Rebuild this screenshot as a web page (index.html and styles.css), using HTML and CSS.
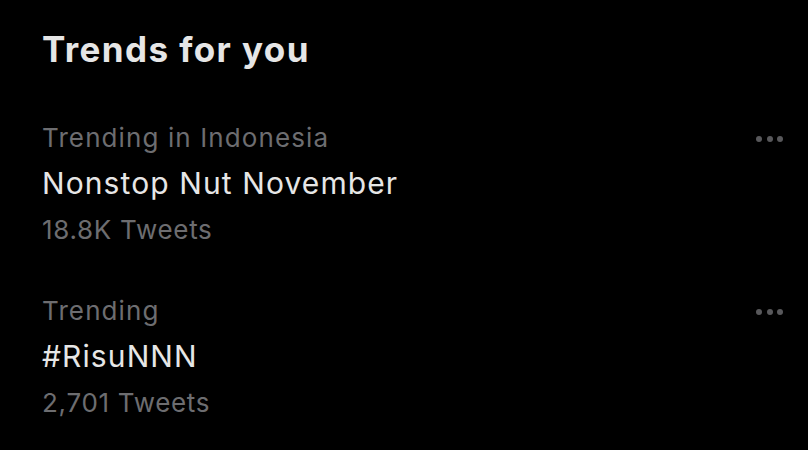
FILE: index.html
```html
<!DOCTYPE html>
<html>
<head>
<meta charset="utf-8">
<link rel="stylesheet" href="styles.css">
</head>
<body>
<section class="panel">
  <h1 class="title">Trends for you</h1>
  <div class="trends">
    <div class="trend">
      <div class="trend-text">
        <div class="context">Trending in Indonesia</div>
        <div class="name">Nonstop Nut November</div>
        <div class="count">18.8K Tweets</div>
      </div>
      <div class="more"><span></span><span></span><span></span></div>
    </div>
    <div class="trend">
      <div class="trend-text">
        <div class="context">Trending</div>
        <div class="name">#RisuNNN</div>
        <div class="count">2,701 Tweets</div>
      </div>
      <div class="more"><span></span><span></span><span></span></div>
    </div>
  </div>
</section>
</body>
</html>
```
FILE: styles.css
```css
html, body {
  margin: 0;
  padding: 0;
  background: #000;
  width: 808px;
  height: 450px;
  overflow: hidden;
}
.panel {
  font-family: Inter, "Liberation Sans", sans-serif;
  padding: 24px 0 0 42px;
}
.title {
  margin: 0;
  font-size: 35px;
  font-weight: 700;
  color: #e6e6e6;
  line-height: 50px;
  letter-spacing: 1.4px;
}
.trends {
  display: flex;
  flex-direction: column;
  gap: 36px;
  margin-top: 42px;
}
.trend {
  display: flex;
  justify-content: space-between;
  align-items: flex-start;
  padding-right: 25px;
}
.trend-text { display: flex; flex-direction: column; }
.context {
  font-size: 26px;
  color: #6d6d70;
  line-height: 44px;
  letter-spacing: 1.1px;
}
.name {
  font-size: 30px;
  color: #e6e6e6;
  line-height: 47px;
  letter-spacing: 1.1px;
}
.count {
  font-size: 26px;
  color: #6d6d70;
  line-height: 46px;
  letter-spacing: 0.7px;
}
.more {
  display: flex;
  gap: 4.5px;
  margin-top: 20px;
}
.more span {
  width: 6px;
  height: 6px;
  border-radius: 50%;
  background: #58585b;
}
```
